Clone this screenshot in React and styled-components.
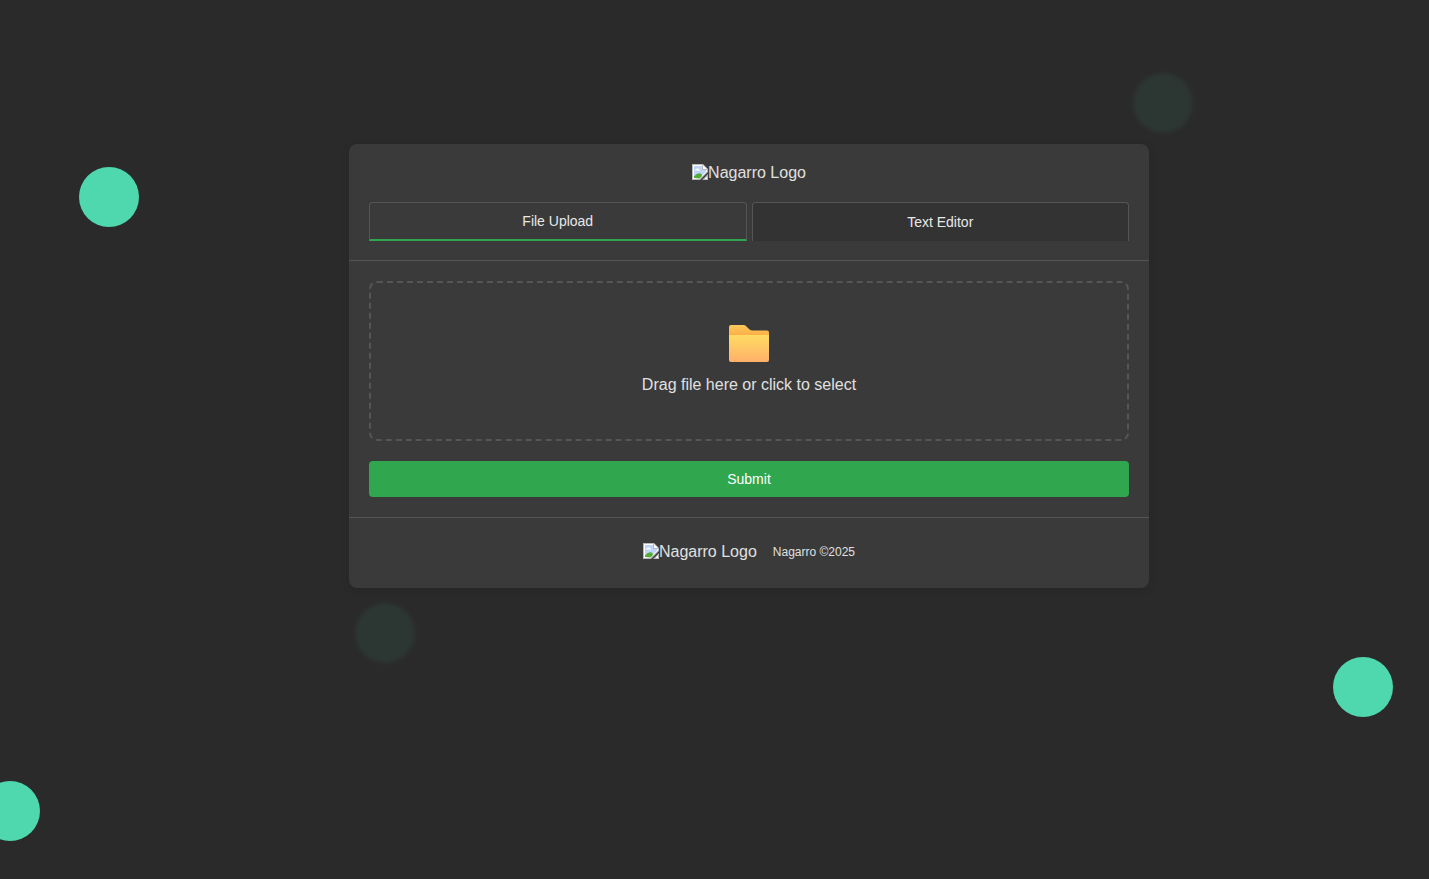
import React, { useState } from "react";
import styled, { createGlobalStyle, css } from "styled-components";

const GlobalStyle = createGlobalStyle`
  *, *::before, *::after { box-sizing: border-box; }
  body {
    margin: 0;
    background: #2a2a2a;
    color: #e0e0e0;
    font-family: "Liberation Sans", Arial, sans-serif;
    font-size: 16px;
    line-height: 18px;
  }
`;

const Page = styled.main`
  position: relative;
  display: flex;
  justify-content: center;
  align-items: flex-start;
  min-height: 100vh;
  padding: 144px 20px 40px 89px;
  overflow: hidden;
`;

const Bubble = styled.span`
  position: absolute;
  top: ${(p) => p.$top}px;
  left: ${(p) => p.$left}%;
  width: 60px;
  height: 60px;
  margin-left: -30px;
  border-radius: 50%;
  background: #4fd7ae;
  ${(p) =>
    p.$faded &&
    css`
      opacity: 0.07;
      filter: blur(2px);
    `}
`;

const Card = styled.section`
  position: relative;
  width: 100%;
  max-width: 800px;
  border-radius: 8px;
  background: #3a3a3a;
  box-shadow: 0 2px 10px rgba(0, 0, 0, 0.1);
`;

const Header = styled.header`
  display: flex;
  flex-direction: column;
  gap: 20px;
  padding: 20px 20px 19px;
  border-bottom: 1px solid #555;
`;

const Logo = styled.span`
  display: flex;
  justify-content: center;
  align-items: flex-start;
  height: 18px;
`;

const Tabs = styled.div`
  display: flex;
  gap: 5px;
`;

const Tab = styled.button`
  flex: 1;
  height: 39px;
  padding: 0 20px;
  border: 1px solid #555;
  border-bottom: ${(p) => (p.$active ? "2px solid #30a64e" : "0")};
  border-radius: 4px 4px 0 0;
  background: ${(p) => (p.$active ? "#3a3a3a" : "#333")};
  color: #e8e8e8;
  font: inherit;
  font-size: 14px;
  cursor: pointer;
`;

const Form = styled.form`
  display: flex;
  flex-direction: column;
  gap: 20px;
  padding: 20px;
`;

const DropZone = styled.label`
  display: flex;
  flex-direction: column;
  align-items: center;
  gap: 14px;
  height: 160px;
  padding: 42px 20px 40px;
  border: 2px dashed #555;
  border-radius: 8px;
  cursor: pointer;
`;

const HiddenInput = styled.input`
  display: none;
`;

const SubmitButton = styled.button`
  height: 36px;
  border: 0;
  border-radius: 4px;
  background: #30a64e;
  color: #fff;
  font: inherit;
  font-size: 14px;
  cursor: pointer;
`;

const Footer = styled.footer`
  display: flex;
  justify-content: center;
  align-items: center;
  gap: 16px;
  height: 71px;
  padding-bottom: 2px;
  border-top: 1px solid #555;
`;

const Copyright = styled.small`
  font-size: 12px;
  line-height: 20px;
`;

function BrokenImage() {
  return (
    <svg width="16" height="16" viewBox="0 0 16 16" aria-hidden="true">
      <path d="M0 0h11l5 5v3l-8 8H0z" fill="#b8b8b8" />
      <path d="M1 1h9v5h5v1.500L7.500 15H1z" fill="#fff" />
      <path d="M2 2h8v4h4v1.500L7.500 14H2z" fill="#bfd4fa" />
      <path d="M3 6.500q0-1.500 1.500-1.500 1-1.500 2.200 0 1.300 0 1.300 1.500z" fill="#fff" />
      <path d="M2 14v-1.500q4-5 7.500-2.500L10 12l-2.500 2.500z" fill="#54ab35" />
      <path d="M11 1v4h4z" fill="#fff" />
      <path d="M16 10v6h-6z" fill="#b8b8b8" />
      <path d="M15 12.500V15h-2.500z" fill="#fff" />
    </svg>
  );
}

function FolderIcon() {
  return (
    <svg width="40" height="37" viewBox="0 0 40 37" aria-hidden="true">
      <defs>
        <linearGradient id="folderBack" x1="0" y1="0" x2="0" y2="1">
          <stop offset="0" stopColor="#ffc85b" />
          <stop offset="0.3" stopColor="#fbb047" />
        </linearGradient>
        <linearGradient id="folderFront" x1="0" y1="0" x2="0" y2="1">
          <stop offset="0" stopColor="#ffdb63" />
          <stop offset="1" stopColor="#ffb06a" />
        </linearGradient>
      </defs>
      <path
        d="M0 2Q0 0 2 0h12.500q1.500 0 2.700 1.200L20 4q1.500 1.500 3.500 1.500H38q2 0 2 2V34H0z"
        fill="url(#folderBack)"
      />
      <path d="M0 10h40v25q0 2-2 2H2q-2 0-2-2z" fill="url(#folderFront)" />
    </svg>
  );
}

function NagarroLogo() {
  return (
    <Logo>
      <BrokenImage />
      Nagarro Logo
    </Logo>
  );
}

const bubbles = [
  { top: 167, left: 7.63 },
  { top: 657, left: 95.35 },
  { top: 781, left: 0.72 },
  { top: 73, left: 81.39, faded: true },
  { top: 603, left: 26.94, faded: true },
];

const tabs = ["File Upload", "Text Editor"];

export default function App() {
  const [active, setActive] = useState(tabs[0]);

  return (
    <>
      <GlobalStyle />
      <Page>
        {bubbles.map((b) => (
          <Bubble key={b.top} $top={b.top} $left={b.left} $faded={b.faded} />
        ))}
        <Card>
          <Header>
            <NagarroLogo />
            <Tabs role="tablist">
              {tabs.map((name) => (
                <Tab
                  key={name}
                  type="button"
                  role="tab"
                  aria-selected={active === name}
                  $active={active === name}
                  onClick={() => setActive(name)}
                >
                  {name}
                </Tab>
              ))}
            </Tabs>
          </Header>
          <Form onSubmit={(e) => e.preventDefault()}>
            <DropZone htmlFor="file">
              <FolderIcon />
              <span>Drag file here or click to select</span>
              <HiddenInput id="file" type="file" />
            </DropZone>
            <SubmitButton type="submit">Submit</SubmitButton>
          </Form>
          <Footer>
            <NagarroLogo />
            <Copyright>Nagarro ©2025</Copyright>
          </Footer>
        </Card>
      </Page>
    </>
  );
}
